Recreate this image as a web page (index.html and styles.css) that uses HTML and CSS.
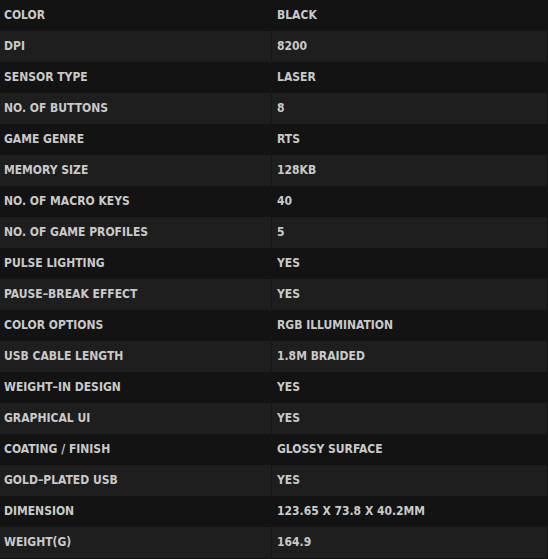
FILE: index.html
```html
<!DOCTYPE html>
<html>
<head>
<meta charset="utf-8">
<link rel="stylesheet" href="styles.css">
</head>
<body>
<div class="specs">
  <div class="row"><div class="key">COLOR</div><div class="val">BLACK</div></div>
  <div class="row"><div class="key">DPI</div><div class="val">8200</div></div>
  <div class="row"><div class="key">SENSOR TYPE</div><div class="val">LASER</div></div>
  <div class="row"><div class="key">NO. OF BUTTONS</div><div class="val">8</div></div>
  <div class="row"><div class="key">GAME GENRE</div><div class="val">RTS</div></div>
  <div class="row"><div class="key">MEMORY SIZE</div><div class="val">128KB</div></div>
  <div class="row"><div class="key">NO. OF MACRO KEYS</div><div class="val">40</div></div>
  <div class="row"><div class="key">NO. OF GAME PROFILES</div><div class="val">5</div></div>
  <div class="row"><div class="key">PULSE LIGHTING</div><div class="val">YES</div></div>
  <div class="row"><div class="key">PAUSE–BREAK EFFECT</div><div class="val">YES</div></div>
  <div class="row"><div class="key">COLOR OPTIONS</div><div class="val">RGB ILLUMINATION</div></div>
  <div class="row"><div class="key">USB CABLE LENGTH</div><div class="val">1.8M BRAIDED</div></div>
  <div class="row"><div class="key">WEIGHT–IN DESIGN</div><div class="val">YES</div></div>
  <div class="row"><div class="key">GRAPHICAL UI</div><div class="val">YES</div></div>
  <div class="row"><div class="key">COATING / FINISH</div><div class="val">GLOSSY SURFACE</div></div>
  <div class="row"><div class="key">GOLD–PLATED USB</div><div class="val">YES</div></div>
  <div class="row"><div class="key">DIMENSION</div><div class="val">123.65 X 73.8 X 40.2MM</div></div>
  <div class="row"><div class="key">WEIGHT(G)</div><div class="val">164.9</div></div>
</div>
</body>
</html>
```
FILE: styles.css
```css
html, body {
  margin: 0;
  padding: 0;
  background: #111111;
}
.specs {
  width: 548px;
  font-family: "DejaVu Sans Condensed", "DejaVu Sans", sans-serif;
  font-weight: bold;
  font-size: 12px;
  color: #c9c9c9;
}
.row {
  display: grid;
  grid-template-columns: 271px 1fr;
  height: 31px;
  background: #131313;
  border-right: 1px solid #141414;
  box-sizing: border-box;
}
.row:nth-child(even) {
  background: #1e1e1e;
}
.key, .val {
  display: flex;
  align-items: center;
  padding-left: 4px;
  padding-bottom: 2px;
}
.val {
  border-left: 1px solid #151515;
  padding-left: 5px;
}
```
